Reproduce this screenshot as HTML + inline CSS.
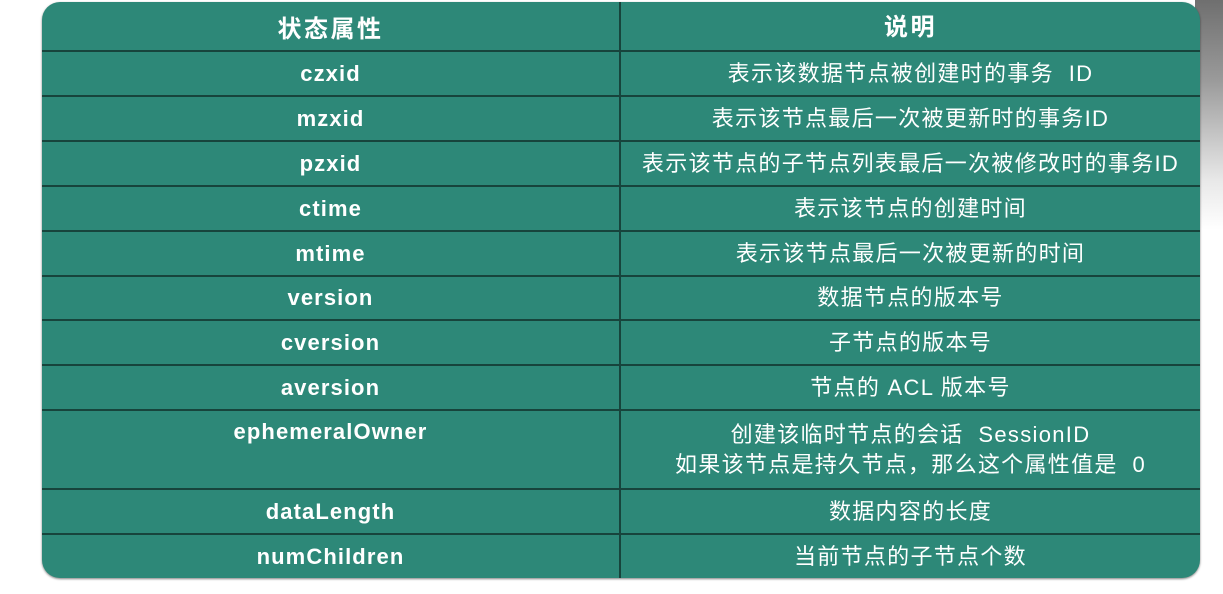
<!DOCTYPE html>
<html><head><meta charset="utf-8"><style>
html,body{margin:0;padding:0;width:1223px;height:594px;overflow:hidden;background:#fff;position:relative}
.strip{position:absolute;left:1195px;top:0;width:28px;height:594px;background:linear-gradient(to bottom,#6f6f6f 0px,#9a9a9a 80px,#e8e8e8 180px,#fff 230px,#fff 594px)}
.tbl{position:absolute;left:42px;top:2px;width:1158px;height:576px;background:#2d8878;border-radius:18px;overflow:hidden;box-shadow:0 1px 2px rgba(0,0,0,.5);font-family:"Liberation Sans","Noto Sans CJK SC",sans-serif;color:#fff}
.row{position:absolute;left:0;width:1158px;border-bottom:2px solid #17443c;box-sizing:border-box}
.row:last-child{border-bottom:none}
.c1,.c2{position:absolute;top:0;bottom:0;display:flex;align-items:center;justify-content:center;text-align:center;white-space:nowrap}
.c1{left:0;width:579px;border-right:2px solid #17443c;box-sizing:border-box;font-weight:bold;font-size:22px;letter-spacing:1.1px}
.c2{left:579px;right:0;font-size:22px;line-height:30px;letter-spacing:1.3px}
.h .c1,.h .c2{font-size:24px;font-weight:bold;letter-spacing:2.5px}
.h .c2{padding-top:4px;box-sizing:border-box}
.top{align-items:flex-start;padding-top:8px;box-sizing:border-box}
</style></head><body>
<div class="strip"></div>
<div class="tbl">
<div class="row h" style="top:0;height:50px"><div class="c1">状态属性</div><div class="c2">说明</div></div>
<div class="row" style="top:50px;height:45px"><div class="c1">czxid</div><div class="c2">表示该数据节点被创建时的事务&nbsp; ID</div></div>
<div class="row" style="top:95px;height:45px"><div class="c1">mzxid</div><div class="c2">表示该节点最后一次被更新时的事务ID</div></div>
<div class="row" style="top:140px;height:45px"><div class="c1">pzxid</div><div class="c2">表示该节点的子节点列表最后一次被修改时的事务ID</div></div>
<div class="row" style="top:185px;height:45px"><div class="c1">ctime</div><div class="c2">表示该节点的创建时间</div></div>
<div class="row" style="top:230px;height:45px"><div class="c1">mtime</div><div class="c2">表示该节点最后一次被更新的时间</div></div>
<div class="row" style="top:275px;height:44px"><div class="c1">version</div><div class="c2">数据节点的版本号</div></div>
<div class="row" style="top:319px;height:45px"><div class="c1">cversion</div><div class="c2">子节点的版本号</div></div>
<div class="row" style="top:364px;height:45px"><div class="c1">aversion</div><div class="c2">节点的 ACL 版本号</div></div>
<div class="row" style="top:409px;height:79px"><div class="c1 top">ephemeralOwner</div><div class="c2">创建该临时节点的会话&nbsp; SessionID<br>如果该节点是持久节点，那么这个属性值是&nbsp; 0</div></div>
<div class="row" style="top:488px;height:45px"><div class="c1">dataLength</div><div class="c2">数据内容的长度</div></div>
<div class="row" style="top:533px;height:43px"><div class="c1">numChildren</div><div class="c2">当前节点的子节点个数</div></div>
</div>
</body></html>
